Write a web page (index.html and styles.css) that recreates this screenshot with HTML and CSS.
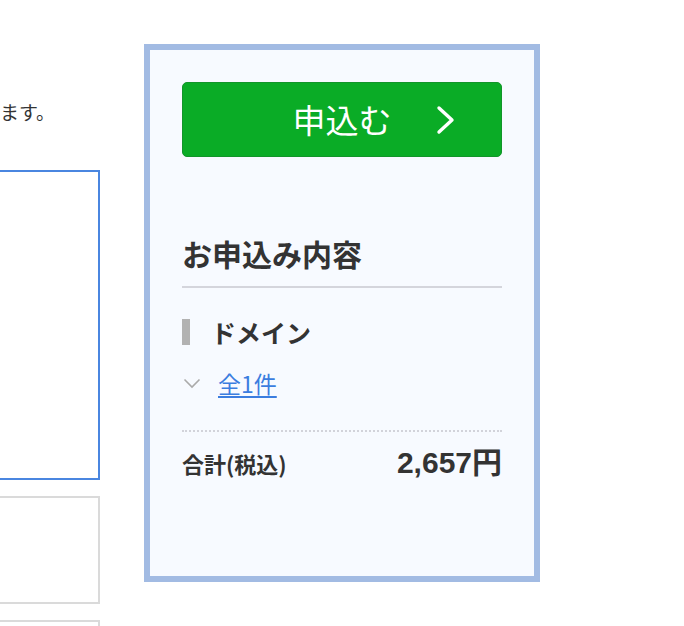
FILE: index.html
```html
<!DOCTYPE html>
<html lang="ja">
<head>
  <meta charset="UTF-8" />
  <meta name="viewport" content="width=device-width, initial-scale=1" />
  <title>お申込み</title>
  <link rel="stylesheet" href="styles.css">
</head>
<body>

<div class="page">
  <main class="content">
    <p class="lead"><span>ご希望のドメインを検索し、取得したいドメインを選択するとお申込みいただけます。</span></p>
    <div class="box box-active"></div>
    <div class="box box-plain"></div>
    <div class="box box-plain"></div>
  </main>

  <aside class="summary">
    <button type="button" class="apply-btn">
      申込む
      <svg class="apply-arrow" width="22" height="30" viewBox="0 0 22 30">
        <polyline points="4,3 17,15 4,27" fill="none" stroke="#fff" stroke-width="3.4" stroke-linecap="round" stroke-linejoin="round" />
      </svg>
    </button>

    <h2 class="summary-title">お申込み内容</h2>

    <h3 class="item-title">ドメイン</h3>
    <div class="item-toggle">
      <svg class="toggle-icon" width="18" height="11" viewBox="0 0 18 11">
        <polyline points="1.5,1.5 9,9 16.5,1.5" fill="none" stroke="#aaaaaa" stroke-width="1.6" />
      </svg>
      <a href="#" class="toggle-link">全1件</a>
    </div>

    <div class="total">
      <span class="total-label">合計(税込)</span>
      <span class="total-price">2,657円</span>
    </div>
  </aside>
</div>

</body>
</html>
```

FILE: styles.css
```css
body {
  margin: 0;
  padding: 0;
  background: #fff;
  color: #333;
  font-family: "Noto Sans CJK JP", "Noto Sans", sans-serif;
  overflow: hidden;
}
.page {
  display: flex;
  align-items: flex-start;
  gap: 44px;
  height: 626px;
  overflow: hidden;
}
.content {
  width: 500px;
  margin-left: -400px;
  padding-top: 100px;
  flex-shrink: 0;
}
.lead {
  margin: 0;
  display: flex;
  justify-content: flex-end;
  overflow: hidden;
  white-space: nowrap;
  font-size: 19px;
  line-height: 24px;
  padding-right: 45px;
  color: #333;
}
.box {
  box-sizing: border-box;
  background: #fff;
}
.box-active {
  margin-top: 46px;
  height: 310px;
  border: 2px solid #4a86e0;
}
.box-plain {
  margin-top: 16px;
  height: 108px;
  border: 2px solid #dadada;
}
.summary {
  margin-top: 44px;
  width: 320px;
  min-height: 462px;
  padding: 32px;
  border: 6px solid #a2bbe3;
  background: #f7faff;
  flex-shrink: 0;
}
.apply-btn {
  position: relative;
  display: flex;
  align-items: center;
  justify-content: center;
  width: 100%;
  height: 75px;
  padding: 0;
  border: 1px solid #12952a;
  border-radius: 5px;
  background: #0aac26;
  color: #fff;
  font-family: inherit;
  font-size: 33px;
  line-height: 1;
  cursor: pointer;
}
.apply-arrow {
  position: absolute;
  right: 44px;
  top: 22px;
}
.summary-title {
  margin: 76px 0 0;
  padding-bottom: 13px;
  border-bottom: 2px solid #d4d5dc;
  font-size: 30px;
  line-height: 40px;
  font-weight: bold;
  color: #333;
}
.item-title {
  display: flex;
  align-items: center;
  margin: 31px 0 0;
  font-size: 25px;
  line-height: 26px;
  font-weight: bold;
  color: #333;
}
.item-title::before {
  content: "";
  width: 8px;
  height: 26px;
  margin-right: 21px;
  background: #b2b2b2;
}
.item-toggle {
  display: flex;
  align-items: center;
  margin-top: 23px;
  padding-bottom: 32px;
  border-bottom: 2px dotted #d2d3da;
  line-height: 30px;
}
.toggle-icon {
  margin-left: 1px;
  margin-right: 17px;
}
.toggle-link {
  font-size: 23px;
  color: #3b7ddf;
  text-decoration: underline;
  text-underline-offset: 3px;
}
.total {
  display: flex;
  align-items: center;
  justify-content: space-between;
  margin-top: 13px;
  line-height: 36px;
  font-weight: bold;
  color: #333;
}
.total-label {
  font-size: 22px;
}
.total-price {
  font-size: 30px;
  font-family: "Liberation Sans", "Noto Sans CJK JP", sans-serif;
}
```
